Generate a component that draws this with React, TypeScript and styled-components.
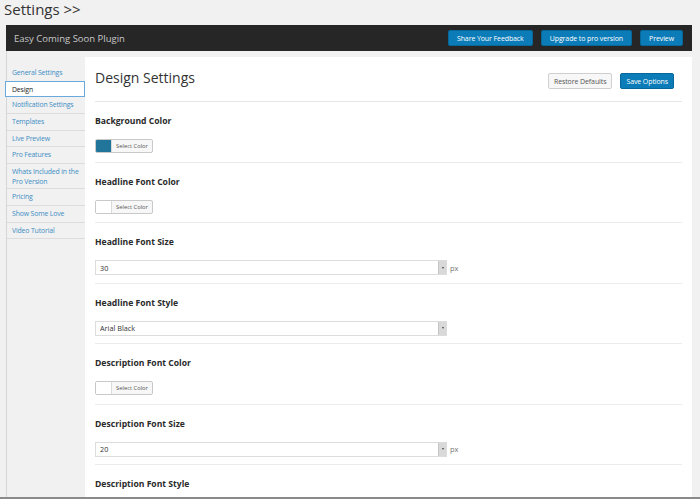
import React from "react";
import styled, { createGlobalStyle } from "styled-components";

const Global = createGlobalStyle`
  html, body { margin: 0; padding: 0; background: #f1f1f1; }
  body { font-family: "Open Sans", "Noto Sans", sans-serif; color: #333; }
  * { box-sizing: border-box; }
`;

const Page = styled.div`
  width: 700px;
  height: 499px;
  overflow: hidden;
  padding: 0 8px 0 6px;
  border-bottom: 2px solid #8a8a8a;
`;

const PageTitle = styled.div`
  height: 25px;
  font-size: 15px;
  line-height: 18px;
  color: #333;
  margin-left: -2px;
`;

const Frame = styled.div`
  display: flex;
  flex-direction: column;
  height: 474px;
`;

const TopBar = styled.div`
  height: 26px;
  background: #262626;
  display: flex;
  align-items: center;
  padding: 0 9px 0 8px;
  gap: 8px;
`;

const BarTitle = styled.div`
  flex: 1;
  color: #c8c8c8;
  font-size: 9.5px;
`;

const Btn = styled.button<{ $primary?: boolean }>`
  height: 16px;
  padding: 0 5px;
  font-family: inherit;
  font-size: 7px;
  letter-spacing: -0.1px;
  border-radius: 2px;
  cursor: pointer;
  background: ${(p) => (p.$primary ? "#0b7cb8" : "#f7f7f7")};
  color: ${(p) => (p.$primary ? "#ffffff" : "#555")};
  border: 1px solid ${(p) => (p.$primary ? "#06679a" : "#cfcfcf")};
`;

const BarBtn = styled(Btn)`
  padding: 0 8px;
`;

const Body = styled.div`
  flex: 1;
  display: flex;
  background: #f1f1f1;
  border-left: 1px solid #d6d6d6;
  min-height: 0;
`;

const Sidebar = styled.div`
  width: 78px;
  padding-top: 14px;
  display: flex;
  flex-direction: column;
`;

const NavItem = styled.div<{ $active?: boolean }>`
  min-height: 16.7px;
  padding: 3px 2px 2px 5px;
  font-size: 6.9px;
  letter-spacing: -0.15px;
  line-height: 9.6px;
  color: ${(p) => (p.$active ? "#222" : "#3d8dc4")};
  background: ${(p) => (p.$active ? "#ffffff" : "transparent")};
  border-bottom: 1px solid #dcdcdc;
  ${(p) =>
    p.$active
      ? "border: 1px solid #6aa9dc; margin-left: -2px; padding-left: 6px; margin-top: -1px;"
      : ""}
`;

const Content = styled.div`
  flex: 1;
  background: #ffffff;
  margin-top: 6px;
  padding: 0 10px 0 10px;
`;

const ContentHead = styled.div`
  height: 45px;
  display: flex;
  align-items: center;
  justify-content: space-between;
  border-bottom: 1px solid #e6e6e6;
  padding-right: 8px;
`;

const Heading = styled.h2`
  margin: 0;
  font-size: 14px;
  font-weight: 400;
  color: #333;
  margin-top: -4px;
`;

const HeadButtons = styled.div`
  display: flex;
  gap: 8px;
  margin-top: 4px;
`;

const Section = styled.div`
  height: 60.5px;
  border-bottom: 1px solid #ececec;
  padding-top: 13px;
`;

const Label = styled.div`
  font-size: 8.6px;
  font-weight: 700;
  color: #2a2a2a;
  height: 24px;
  line-height: 12px;
`;

const ColorPicker = styled.div`
  display: flex;
  width: 58px;
  height: 14px;
  border: 1px solid #c9c9c9;
  border-radius: 2px;
  background: #f7f7f7;
  overflow: hidden;
`;

const Swatch = styled.div<{ $color: string }>`
  width: 16px;
  background: ${(p) => p.$color};
  border-right: 1px solid #dadada;
`;

const PickerText = styled.div`
  flex: 1;
  font-size: 5.8px;
  color: #555;
  display: flex;
  align-items: center;
  justify-content: center;
`;

const SelectRow = styled.div`
  display: flex;
  align-items: center;
  gap: 3px;
`;

const Select = styled.div`
  width: 352px;
  height: 15px;
  border: 1px solid #dcdcdc;
  display: flex;
  align-items: center;
  justify-content: space-between;
  padding-left: 4px;
  font-size: 7.3px;
  color: #333;
`;

const Arrow = styled.div`
  width: 8px;
  height: 13px;
  background: #d9d9d9;
  border-left: 1px solid #c4c4c4;
  display: flex;
  align-items: center;
  justify-content: center;
  &::after {
    content: "";
    border-left: 1.5px solid transparent;
    border-right: 1.5px solid transparent;
    border-top: 2px solid #444;
  }
`;

const Unit = styled.span`
  font-size: 7.5px;
  color: #777;
`;

const navItems = [
  "General Settings",
  "Design",
  "Notification Settings",
  "Templates",
  "Live Preview",
  "Pro Features",
  "Whats Included in the Pro Version",
  "Pricing",
  "Show Some Love",
  "Video Tutorial",
];

type Field =
  | { kind: "color"; label: string; color: string }
  | { kind: "select"; label: string; value: string; unit?: string }
  | { kind: "label"; label: string };

const fields: Field[] = [
  { kind: "color", label: "Background Color", color: "#21759b" },
  { kind: "color", label: "Headline Font Color", color: "#ffffff" },
  { kind: "select", label: "Headline Font Size", value: "30", unit: "px" },
  { kind: "select", label: "Headline Font Style", value: "Arial Black" },
  { kind: "color", label: "Description Font Color", color: "#ffffff" },
  { kind: "select", label: "Description Font Size", value: "20", unit: "px" },
  { kind: "label", label: "Description Font Style" },
];

export default function App() {
  return (
    <>
      <Global />
      <Page>
        <PageTitle>Settings &gt;&gt;</PageTitle>
        <Frame>
          <TopBar>
            <BarTitle>Easy Coming Soon Plugin</BarTitle>
            <BarBtn $primary>Share Your Feedback</BarBtn>
            <BarBtn $primary>Upgrade to pro version</BarBtn>
            <BarBtn $primary>Preview</BarBtn>
          </TopBar>
          <Body>
            <Sidebar>
              {navItems.map((n) => (
                <NavItem key={n} $active={n === "Design"}>
                  {n}
                </NavItem>
              ))}
            </Sidebar>
            <Content>
              <ContentHead>
                <Heading>Design Settings</Heading>
                <HeadButtons>
                  <Btn>Restore Defaults</Btn>
                  <Btn $primary>Save Options</Btn>
                </HeadButtons>
              </ContentHead>
              {fields.map((f) => (
                <Section key={f.label}>
                  <Label>{f.label}</Label>
                  {f.kind === "color" && (
                    <ColorPicker>
                      <Swatch $color={f.color} />
                      <PickerText>Select Color</PickerText>
                    </ColorPicker>
                  )}
                  {f.kind === "select" && (
                    <SelectRow>
                      <Select>
                        <span>{f.value}</span>
                        <Arrow />
                      </Select>
                      {f.unit && <Unit>{f.unit}</Unit>}
                    </SelectRow>
                  )}
                </Section>
              ))}
            </Content>
          </Body>
        </Frame>
      </Page>
    </>
  );
}
